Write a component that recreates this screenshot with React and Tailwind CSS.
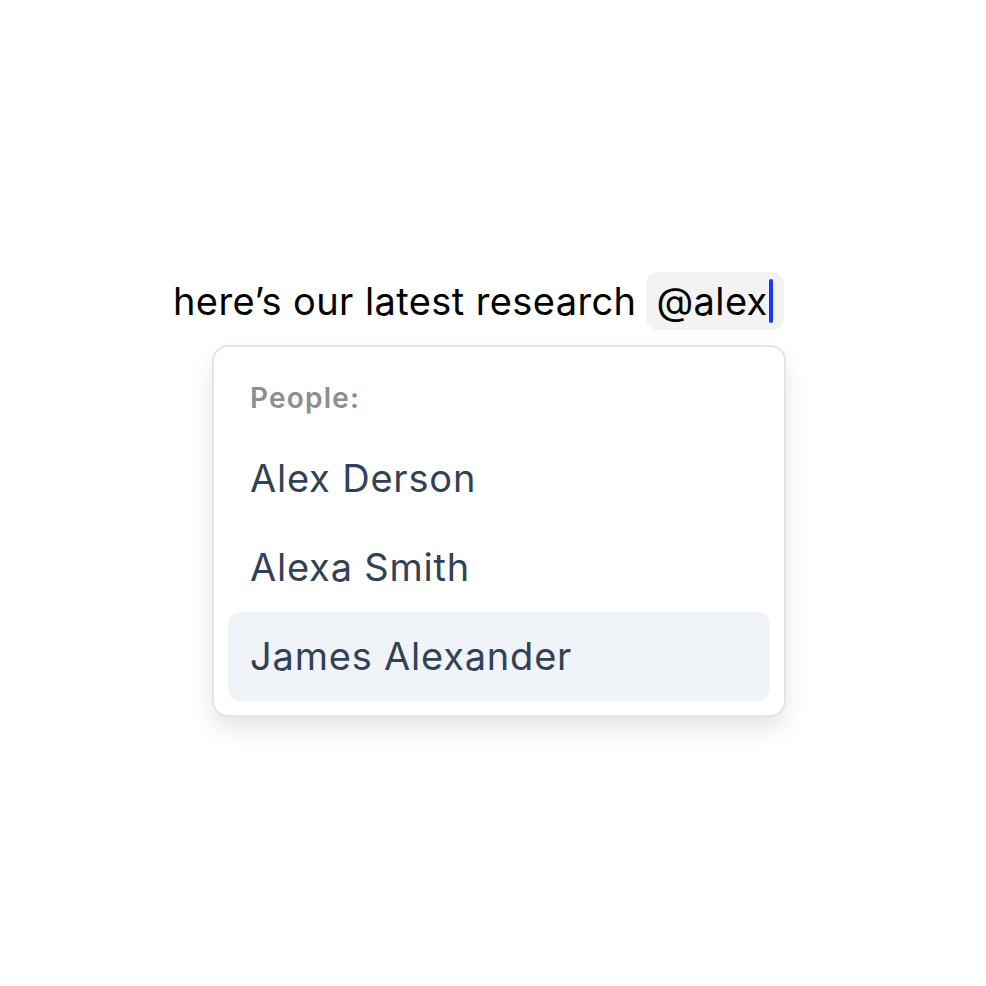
export default function App() {
  const people = ['Alex Derson', 'Alexa Smith', 'James Alexander'];
  const active = 2;

  return (
    <div className="w-[986px] h-[986px] bg-white font-['Inter',sans-serif]">
      <div className="pt-[272px] pl-[173px]">
        {/* Composer line */}
        <div className="flex items-center text-[38px] leading-none text-black">
          <span className="tracking-[0.4px]">here’s our latest research</span>
          <span className="ml-[10px] flex items-center h-[58px] pl-[10px] pr-[11px] rounded-[12px] bg-[#f3f3f4] tracking-[0.4px]">
            @alex
            <span className="ml-[1px] w-[4px] h-[44px] rounded-full bg-[#1638ff]" />
          </span>
        </div>

        {/* Mention dropdown */}
        <div className="ml-[39px] mt-[15px] w-[574px] rounded-[16px] border-2 border-[#e4e4e7] bg-white p-[14px] shadow-[0_12px_22px_rgba(0,0,0,0.1)]">
          <div className="px-[22px] pt-[23px] pb-[22px] text-[28px] font-semibold leading-none tracking-[1.2px] text-[#8b8e95]">
            People:
          </div>
          <div className="flex flex-col">
            {people.map((name, i) => (
              <div
                key={name}
                className={
                  'flex items-center h-[89px] px-[22px] rounded-[12px] text-[38px] tracking-[0.8px] text-[#334155] ' +
                  (i === active ? 'bg-[#f0f3f8]' : '')
                }
              >
                {name}
              </div>
            ))}
          </div>
        </div>
      </div>
    </div>
  );
}
